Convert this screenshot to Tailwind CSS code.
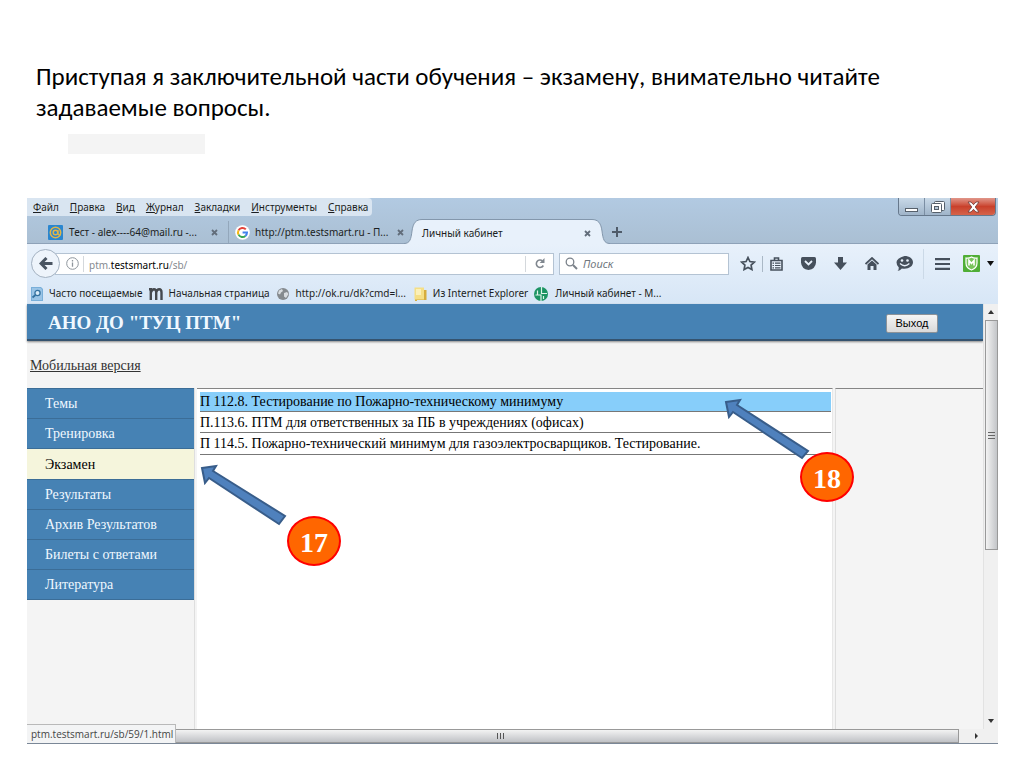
<!DOCTYPE html>
<html lang="ru">
<head>
<meta charset="utf-8">
<meta name="viewport" content="width=device-width, initial-scale=1">
<title>Экзамен</title>
<script src="https://cdn.jsdelivr.net/npm/@tailwindcss/browser@4"></script>
</head>
<body class="bg-white">
<main class="flex min-h-screen flex-col pr-[26px] pb-6 pl-[27px]">
  <h1 class="mt-[61px] pl-[9px] font-['Carlito','Open_Sans',sans-serif] text-[25px] leading-[31px] text-black [font-kerning:none]">Приступая я заключительной части обучения – экзамену, внимательно читайте<br>задаваемые вопросы.</h1>
  <div class="mt-[11px] ml-[41px] h-5 w-[137px] bg-[#f4f4f4]"></div>

  <section class="relative mt-[44px] flex grow flex-col border-b border-[#7a8797] font-['Noto_Sans',sans-serif] text-[10px] text-[#1b1e22]">
    <!-- menu and tabs -->
    <div class="flex flex-col bg-linear-to-b from-[#b2cae2] to-[#aabfd3]">
      <div class="flex h-[19px] items-start justify-between">
        <nav class="flex h-[18px] items-center gap-[11px] rounded-r bg-[#d9e5f1] pr-1 pl-[6px]" aria-label="Меню">
          <button><u>Ф</u>айл</button><button><u>П</u>равка</button><button><u>В</u>ид</button><button><u>Ж</u>урнал</button><button><u>З</u>акладки</button><button><u>И</u>нструменты</button><button><u>С</u>правка</button>
        </nav>
        <div class="mr-[2px] flex h-[18px] overflow-hidden rounded-b border border-t-0 border-[#66788c]">
          <button aria-label="Свернуть" class="flex w-[26px] items-end justify-center border-r border-[#7b8ea3] bg-linear-to-b from-[#c9d9e8] to-[#9fb4c9]"><svg width="13" height="9" viewBox="0 0 13 9"><rect x=".5" y="2.500" width="12" height="3" fill="#fff" stroke="#56606b"/></svg></button>
          <button aria-label="Развернуть" class="flex w-[26px] items-center justify-center border-r border-[#7b8ea3] bg-linear-to-b from-[#c9d9e8] to-[#9fb4c9]"><svg width="14" height="12" viewBox="0 0 14 12"><rect x="3.500" y=".5" width="10" height="9" rx="1" fill="#fff" stroke="#56606b"/><rect x=".5" y="2.500" width="10" height="9" rx="1" fill="#fff" stroke="#56606b"/><rect x="3.500" y="5.500" width="4" height="3" fill="#b8c8d8" stroke="#56606b"/></svg></button>
          <button aria-label="Закрыть" class="flex w-[44px] items-center justify-center bg-linear-to-b from-[#e0968a] via-[#c9402b] to-[#d5634a]"><svg width="13" height="12" viewBox="0 0 13 12"><path d="M1 1h3l2.500 2.700L9 1h3L8.200 6l3.800 5H9L6.500 8.300 4 11H1l3.800-5z" fill="#fff" stroke="#6b3a38" stroke-width=".8"/></svg></button>
        </div>
      </div>
      <div class="flex h-[27px] items-end border-b border-[#8ea2b8]">
        <div class="ml-[21px] flex h-[22px] w-[180px] items-center">
          <svg width="15" height="15" viewBox="0 0 15 15"><rect width="15" height="15" rx="1" fill="#2a86cf"/><circle cx="7.500" cy="7.500" r="5.200" fill="none" stroke="#e0b548" stroke-width="1.500"/><circle cx="7.500" cy="7.500" r="2.300" fill="none" stroke="#e0b548" stroke-width="1.500"/><path d="M10 5v4q.8 1.500 2.500.8" stroke="#e0b548" fill="none" stroke-width="1.200"/></svg>
          <span class="ml-[6px]">Тест - alex----64@mail.ru -...</span>
          <button aria-label="Закрыть вкладку" class="mr-[10px] ml-auto"><svg width="7" height="7" viewBox="0 0 7 7"><path d="M1 1l5 5M6 1L1 6" stroke="#626d7a" stroke-width="1.800"/></svg></button>
        </div>
        <div class="flex h-[22px] w-[184px] items-center border-l border-[#93a7bb] pl-[6px]">
          <svg width="15" height="15" viewBox="0 0 15 15"><circle cx="7.500" cy="7.500" r="7.300" fill="#fff"/><g fill="none" stroke-width="2"><path d="M10.800 4.400A4.500 4.500 0 0 0 3.500 5.400" stroke="#e4433a"/><path d="M3.500 5.400a4.500 4.500 0 0 0 0 4.200" stroke="#f5b914"/><path d="M3.500 9.600a4.500 4.500 0 0 0 6.900 1.300" stroke="#36a653"/><path d="M10.400 10.900A4.500 4.500 0 0 0 12 7.500H7.600" stroke="#4182ee"/></g></svg>
          <span class="ml-[5px]">http://ptm.testsmart.ru - П...</span>
          <button aria-label="Закрыть вкладку" class="mr-[8px] ml-auto"><svg width="7" height="7" viewBox="0 0 7 7"><path d="M1 1l5 5M6 1L1 6" stroke="#626d7a" stroke-width="1.800"/></svg></button>
        </div>
        <div class="-mb-px -ml-[8px] flex h-[25px] items-stretch">
          <svg width="18" height="25" viewBox="0 0 18 25"><path d="M0 24.500C6 24.500 7 20 8 12 9 4 12 .5 18 .5V25H0z" fill="#e8f1fb"/><path d="M0 24.500C6 24.500 7 20 8 12 9 4 12 .5 18 .5" fill="none" stroke="#8397ac"/></svg>
          <div class="flex w-[170px] items-center border-t border-[#8397ac] bg-[#e8f1fb] pt-[2px]"><span>Личный кабинет</span><button aria-label="Закрыть вкладку" class="mr-[1px] ml-auto"><svg width="7" height="7" viewBox="0 0 7 7"><path d="M1 1l5 5M6 1L1 6" stroke="#626d7a" stroke-width="1.800"/></svg></button></div>
          <svg width="18" height="25" viewBox="0 0 18 25"><path d="M18 24.500C12 24.500 11 20 10 12 9 4 6 .5 0 .5V25h18z" fill="#e8f1fb"/><path d="M18 24.500C12 24.500 11 20 10 12 9 4 6 .5 0 .5" fill="none" stroke="#8397ac"/></svg>
        </div>
        <button aria-label="Новая вкладка" class="mb-[6px] ml-[2px]"><svg width="10" height="10" viewBox="0 0 10 10"><path d="M5 0v10M0 5h10" stroke="#4f5b69" stroke-width="2"/></svg></button>
      </div>
    </div>

    <!-- address row -->
    <div class="bg-linear-to-b from-[#e8f1fb] to-[#d7e6f6]">
      <div class="flex h-[39px] items-center pr-1 pl-1">
        <button aria-label="Назад" class="z-10 flex size-[29px] shrink-0 items-center justify-center rounded-full border border-[#a3b1c1] bg-[#eef4fb]"><svg width="14" height="13" viewBox="0 0 14 13"><path d="M7.500 1L2 6.500 7.500 12M2.500 6.500H13.500" stroke="#4a5562" stroke-width="3" fill="none"/></svg></button>
        <div class="-ml-[5px] flex h-[22px] min-w-0 grow items-center border border-[#b4c3d3] bg-white pl-[10px]">
          <svg class="shrink-0" width="13" height="13" viewBox="0 0 13 13"><circle cx="6.500" cy="6.500" r="5.800" fill="none" stroke="#8e959c"/><path d="M6.500 5.500v4.300M6.500 3v1.400" stroke="#8e959c" stroke-width="1.300"/></svg>
          <div class="ml-[4px] h-4 border-l border-[#d4d8dc] pl-[5px] leading-[18px] text-[#858a90]">ptm.<span class="text-black">testsmart.ru</span>/sb/</div>
          <button aria-label="Обновить" class="ml-auto flex h-4 w-[28px] items-center justify-center border-l border-[#d4d8dc]"><svg width="10" height="11" viewBox="0 0 10 11"><path d="M8.300 7.500A3.700 3.700 0 1 1 7.500 3" stroke="#80878f" stroke-width="1.600" fill="none"/><path d="M9.500 0v5H4.700z" fill="#80878f"/></svg></button>
        </div>
        <label class="ml-[5px] flex h-[22px] w-[170px] items-center gap-[5px] border border-[#b4c3d3] bg-white pl-[5px]">
          <svg width="13" height="13" viewBox="0 0 13 13"><circle cx="5" cy="5" r="3.800" fill="none" stroke="#7b828a" stroke-width="1.300"/><path d="M8 8l4 4" stroke="#7b828a" stroke-width="2"/></svg>
          <input type="text" aria-label="Поиск" placeholder="Поиск" class="w-[130px] min-w-0 pt-[2px] text-[11px] italic outline-none placeholder:text-[#70777e]">
        </label>
        <button aria-label="В закладки" class="ml-[11px]"><svg width="16" height="15" viewBox="0 0 16 15"><path d="M8 1.500l1.900 4 4.400.6-3.200 3 .8 4.400L8 11.400l-3.900 2.100.8-4.400-3.200-3 4.400-.6z" fill="none" stroke="#46505c" stroke-width="1.700"/></svg></button>
        <div class="ml-[6px] h-4 border-l border-[#aab8c6]"></div>
        <button aria-label="Список закладок" class="ml-[7px]"><svg width="13" height="14" viewBox="0 0 13 14"><path d="M4.500 1h4v2.500h-4zM1 3.500h11V13H1z" fill="#e8f1fb" stroke="#46505c" stroke-width="1.600"/><path d="M2.500 6.200h1.500M5 6.200h5.500M2.500 8.500h1.500M5 8.500h5.500M2.500 10.800h1.500M5 10.800h5.500" stroke="#46505c" stroke-width="1.200"/></svg></button>
        <button aria-label="Pocket" class="ml-[18px]"><svg width="15" height="13" viewBox="0 0 15 13"><path d="M1.500 0h12Q15 0 15 1.500V5.500Q14.500 12 7.500 13 .5 12 0 5.500v-4Q0 0 1.500 0z" fill="#46505c"/><path d="M4 4l3.500 3.500L11 4" stroke="#e8f1fb" stroke-width="1.800" fill="none"/></svg></button>
        <button aria-label="Загрузки" class="ml-[18px]"><svg width="13" height="13" viewBox="0 0 13 13"><path d="M4 0h5v5.500h4L6.500 13 0 5.500h4z" fill="#46505c"/></svg></button>
        <button aria-label="Домой" class="ml-[18px]"><svg width="14" height="13" viewBox="0 0 14 13"><path d="M.5 7L7 1l6.500 6" stroke="#46505c" stroke-width="1.800" fill="none"/><path d="M2.500 7.500L7 3.500l4.500 4V13H8.500V9h-3v4h-3z" fill="#46505c"/></svg></button>
        <button aria-label="Чат" class="ml-[17px]"><svg width="17" height="15" viewBox="0 0 17 15"><path d="M8.500 0c5 0 8.500 2.600 8.500 6.300s-3.500 6.400-8.500 6.400q-1.600 0-2.600-.3Q4 14.800 1.500 15q1.400-1.400 1.300-3.600Q.5 9.700.5 6.300.5 2.600 8.500 0z" fill="#46505c"/><circle cx="6" cy="4.500" r="1.300" fill="#e8f1fb"/><circle cx="11.500" cy="4.500" r="1.300" fill="#e8f1fb"/><path d="M4 7.500q4.700 4.500 9.400 0" stroke="#e8f1fb" stroke-width="1.300" fill="none"/></svg></button>
        <div class="ml-[10px] h-[30px] border-l border-[#cbd9e7]"></div>
        <button aria-label="Меню" class="ml-[11px]"><svg width="15" height="12" viewBox="0 0 15 12"><path d="M0 1.200h15M0 6h15M0 10.800h15" stroke="#46505c" stroke-width="2.200"/></svg></button>
        <button aria-label="McAfee" class="ml-[13px]"><svg width="17" height="17" viewBox="0 0 17 17"><rect width="17" height="17" rx="1" fill="#4fae36"/><path d="M3 3q3 .5 5.500-1Q11 3.500 14 3v5q0 5-5.500 7Q3 13 3 8z" fill="#78c45c" stroke="#fff" stroke-width="1.200"/><path d="M6 10.500V5.500l2.500 3 2.500-3v5" stroke="#fff" stroke-width="1.600" fill="none"/></svg></button>
        <button aria-label="Ещё" class="ml-[7px]"><svg width="7" height="5" viewBox="0 0 7 5"><path d="M0 0h7L3.500 5z" fill="#111"/></svg></button>
      </div>
      <nav class="flex h-[21px] items-center pl-1" aria-label="Закладки">
        <a href="#" class="flex items-center gap-[6px]"><svg width="12" height="14" viewBox="0 0 12 14"><path d="M0 0h10l2 2v12H0z" fill="#79afd9"/><path d="M1 1h8.500L11 2.500V13H1z" fill="#9ac4e6"/><circle cx="6.500" cy="6" r="2.600" fill="#d9ebf8" stroke="#33719f" stroke-width="1.300"/><path d="M4.500 8L1.500 10.500" stroke="#33719f" stroke-width="1.800"/></svg>Часто посещаемые</a>
        <a href="#" class="ml-[7px] flex items-center gap-[5px]"><svg width="14" height="12" viewBox="0 0 14 12"><path d="M0 1.200h3M1.800 12V0M1.800 4.500Q3 1.200 5 1.200 7.200 1.200 7.200 4.500V12M7.200 4.500q.8-3.300 3-3.300 2.300 0 2.300 3.300V12" fill="none" stroke="#45494e" stroke-width="2.400"/></svg>Начальная страница</a>
        <a href="#" class="ml-[7px] flex items-center gap-[7px]"><svg width="12" height="12" viewBox="0 0 12 12"><circle cx="6" cy="6" r="6" fill="#858a8e"/><path d="M2 2.500l3-1.500 1 2-2 1.500-1 2-2-1zM7 5l3-1 1.500 2L9 10 7 8.500z" fill="#d8dce0"/></svg>http://ok.ru/dk?cmd=l...</a>
        <a href="#" class="ml-[8px] flex items-center gap-[6px]"><svg width="13" height="14" viewBox="0 0 13 14"><path d="M1 1h9v2h2.500v10H3v1H1z" fill="#d6ad3d"/><path d="M.5.500h9.500v12H.5z" fill="#f5df86"/><path d="M2 2h5v6H2z" fill="#fbf0b8"/></svg>Из Internet Explorer</a>
        <a href="#" class="ml-[6px] flex items-center gap-[7px]"><svg width="14" height="14" viewBox="0 0 14 14"><circle cx="7" cy="7" r="7" fill="#1c9463"/><path d="M7.500 0v6.500H13M1.500 8H7v6M3.500 3.500v4M9.500 9v3" stroke="#dff3e9" stroke-width="1.200" fill="none"/></svg>Личный кабинет - М...</a>
      </nav>
    </div>

    <!-- web page with its vertical scroll bar -->
    <div class="flex grow bg-[#f4f4f4] font-['Liberation_Serif',serif] text-[14px] text-black">
      <div class="flex min-w-0 grow flex-col">
        <header class="flex h-[37px] items-center justify-between border-b-2 border-[#35536f] bg-[#4682b4] pt-[3px] pr-[45px] pl-[21px] shadow-[0_1px_2px_#888]">
          <strong class="text-[19px] text-[#f0f8ff] [font-kerning:none]">АНО ДО "ТУЦ ПТМ"</strong>
          <button class="h-[19px] w-[52px] rounded-[2px] border border-[#8c9298] bg-linear-to-b from-[#f5f5f5] to-[#d9d9d9] font-['Liberation_Sans',sans-serif] text-[11px]">Выход</button>
        </header>
        <div class="flex h-[47px] items-center pt-[2px] pl-[3px]"><a href="#" class="text-[#333] underline">Мобильная версия</a></div>
        <div class="flex grow gap-[2px]">
          <nav class="w-[168px] shrink-0 border-r border-[#dedede]" aria-label="Разделы">
            <a href="#" class="flex h-[31px] items-center border-y border-[#3b6d97] bg-[#4682b4] pl-[18px] text-[#f0f8ff]">Темы</a>
            <a href="#" class="flex h-[30px] items-center border-b border-[#3b6d97] bg-[#4682b4] pl-[18px] text-[#f0f8ff]">Тренировка</a>
            <a href="#" class="flex h-[30px] items-center bg-[#f5f5dc] pl-[18px] text-black">Экзамен</a>
            <a href="#" class="flex h-[31px] items-center border-y border-[#3b6d97] bg-[#4682b4] pl-[18px] text-[#f0f8ff]">Результаты</a>
            <a href="#" class="flex h-[30px] items-center border-b border-[#3b6d97] bg-[#4682b4] pl-[18px] text-[#f0f8ff]">Архив Результатов</a>
            <a href="#" class="flex h-[30px] items-center border-b border-[#3b6d97] bg-[#4682b4] pl-[18px] text-[#f0f8ff]">Билеты с ответами</a>
            <a href="#" class="flex h-[30px] items-center border-b border-[#3b6d97] bg-[#4682b4] pl-[18px] text-[#f0f8ff]">Литература</a>
          </nav>
          <div class="min-w-0 grow border-t border-r border-t-[#858585] border-r-[#e8e8e8] bg-white pt-[3px] pr-px pl-[3px]">
            <a href="#" class="flex h-[20px] items-center border-b border-[#777] bg-[#87cefa]">П 112.8. Тестирование по Пожарно-техническому минимуму</a>
            <a href="#" class="flex h-[21px] items-center border-b border-[#777]">П.113.6. ПТМ для ответственных за ПБ в учреждениях (офисах)</a>
            <a href="#" class="flex h-[22px] items-center border-b border-[#777]">П 114.5. Пожарно-технический минимум для газоэлектросварщиков. Тестирование.</a>
          </div>
          <div class="w-[148px] shrink-0 border-t border-l border-t-[#858585] border-l-[#dedede]"></div>
        </div>
      </div>
      <div class="flex w-[15px] shrink-0 flex-col items-center border-l border-[#e2e2e2] bg-[#f0f0f0]">
        <svg class="mt-[6px]" width="6" height="4" viewBox="0 0 6 4"><path d="M3 0l3 4H0z" fill="#333"/></svg>
        <div class="mt-[6px] flex h-[230px] w-[13px] flex-col items-center justify-center gap-[2px] border border-[#999] bg-linear-to-r from-[#f3f3f3] to-[#c3c5c8]">
          <i class="h-px w-[7px] bg-[#666]"></i><i class="h-px w-[7px] bg-[#666]"></i><i class="h-px w-[7px] bg-[#666]"></i>
        </div>
        <svg class="mt-auto mb-[6px]" width="6" height="4" viewBox="0 0 6 4"><path d="M0 0h6L3 4z" fill="#333"/></svg>
      </div>
    </div>

    <!-- horizontal scroll bar -->
    <div class="flex h-[14px] items-center bg-[#f0f0f0]">
      <div class="flex h-[14px] grow items-center justify-center gap-[2px] border border-[#999] bg-linear-to-b from-[#f3f3f3] to-[#c0c2c6] pl-[15px]">
        <i class="h-[6px] w-px bg-[#555]"></i><i class="h-[6px] w-px bg-[#555]"></i><i class="h-[6px] w-px bg-[#555]"></i>
      </div>
      <svg class="mr-5 ml-4" width="3" height="6" viewBox="0 0 3 6"><path d="M0 0l3 3-3 3z" fill="#333"/></svg>
    </div>

    <!-- link address over the page corner -->
    <div class="absolute bottom-0 left-0 flex h-[19px] w-[149px] items-center border-t border-r border-[#b9b9b9] bg-[#f3f4f5] pt-px pl-[4px] font-['Open_Sans',sans-serif] whitespace-nowrap text-[#444]">ptm.testsmart.ru/sb/59/1.html</div>

    <!-- callouts -->
    <svg class="absolute top-[262px] left-[173px]" width="88" height="66" viewBox="0 0 88 66"><path d="M2 8L16 6 13 11 85 56 79 64 9 18 5 23z" fill="#4f81bd" stroke="#385d8a" stroke-width="2"/></svg>
    <div class="absolute top-[318px] left-[260px] flex h-[50px] w-[54px] items-center justify-center rounded-[50%] border-2 border-[#f00] bg-[#f60] pt-1 font-['Liberation_Serif',serif] text-[28px] font-bold text-white">17</div>
    <svg class="absolute top-[199px] left-[697px]" width="88" height="66" viewBox="0 0 88 66"><path d="M2 5L16 3 13 8 84 54 78 61 9 15 5 20z" fill="#4f81bd" stroke="#385d8a" stroke-width="2"/></svg>
    <div class="absolute top-[254px] left-[773px] flex h-[50px] w-[54px] items-center justify-center rounded-[50%] border-2 border-[#f00] bg-[#f60] pt-1 font-['Liberation_Serif',serif] text-[28px] font-bold text-white">18</div>
  </section>
</main>
</body>
</html>
